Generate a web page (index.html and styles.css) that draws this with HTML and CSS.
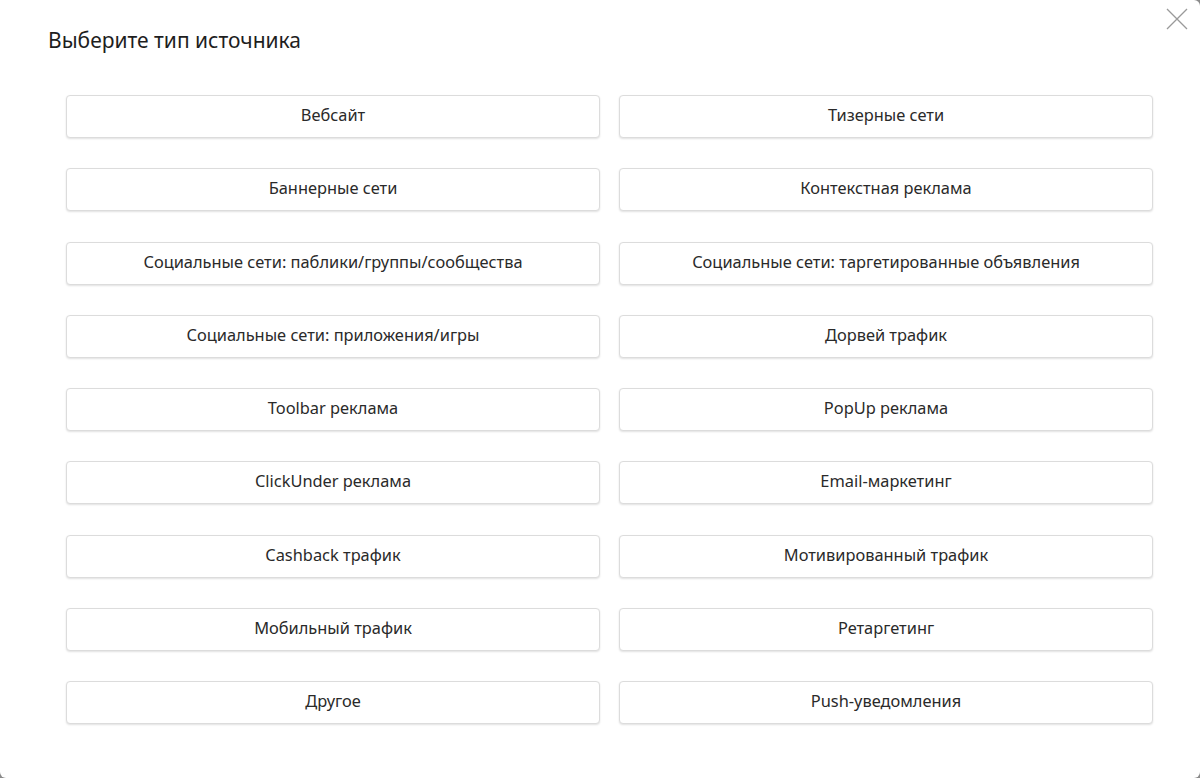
FILE: index.html
```html
<!DOCTYPE html>
<html lang="ru">
<head>
<meta charset="utf-8">
<link rel="stylesheet" href="styles.css">
</head>
<body>
<div class="dialog">
  <button class="close" aria-label="Закрыть">
    <svg width="22" height="22" viewBox="0 0 22 22"><path d="M1 1L21 21M21 1L1 21" stroke="#9a9a9a" stroke-width="1.3" fill="none"/></svg>
  </button>
  <h1 class="title">Выберите тип источника</h1>
  <div class="grid">
    <button class="opt">Вебсайт</button>
    <button class="opt">Тизерные сети</button>
    <button class="opt">Баннерные сети</button>
    <button class="opt">Контекстная реклама</button>
    <button class="opt">Социальные сети: паблики/группы/сообщества</button>
    <button class="opt">Социальные сети: таргетированные объявления</button>
    <button class="opt">Социальные сети: приложения/игры</button>
    <button class="opt">Дорвей трафик</button>
    <button class="opt">Toolbar реклама</button>
    <button class="opt">PopUp реклама</button>
    <button class="opt">ClickUnder реклама</button>
    <button class="opt">Email-маркетинг</button>
    <button class="opt">Cashback трафик</button>
    <button class="opt">Мотивированный трафик</button>
    <button class="opt">Мобильный трафик</button>
    <button class="opt">Ретаргетинг</button>
    <button class="opt">Другое</button>
    <button class="opt">Push-уведомления</button>
  </div>
</div>
</body>
</html>
```
FILE: styles.css
```css
html, body {
  margin: 0;
  padding: 0;
  background: #8a8a8a;
  height: 100%;
}
.dialog {
  position: relative;
  background: #fff;
  height: 778px;
  box-sizing: border-box;
  border-radius: 0 6px 6px 6px;
  padding: 25px 47px 0 48px;
  font-family: "Noto Sans", "Open Sans", sans-serif;
  color: #222;
}
.close {
  position: absolute;
  top: 8px;
  right: 12px;
  width: 22px;
  height: 22px;
  padding: 0;
  border: 0;
  background: transparent;
  cursor: pointer;
}
.close svg { display: block; }
.title {
  margin: 0;
  font-size: 21px;
  font-weight: 400;
  line-height: 30px;
  color: #1e1e1e;
  letter-spacing: 0;
}
.grid {
  display: grid;
  grid-template-columns: 534px 534px;
  column-gap: 19px;
  row-gap: 30.25px;
  margin-top: 40px;
  margin-left: 18px;
}
.opt {
  height: 43px;
  border: 1px solid #dcdcdc;
  border-radius: 4px;
  background: #fff;
  box-shadow: 0 1px 2px rgba(0,0,0,0.12);
  font-family: "Noto Sans", "Open Sans", sans-serif;
  font-size: 16.4px;
  color: #2a2a2a;
  padding: 0 0 4px;
  cursor: pointer;
}
```
